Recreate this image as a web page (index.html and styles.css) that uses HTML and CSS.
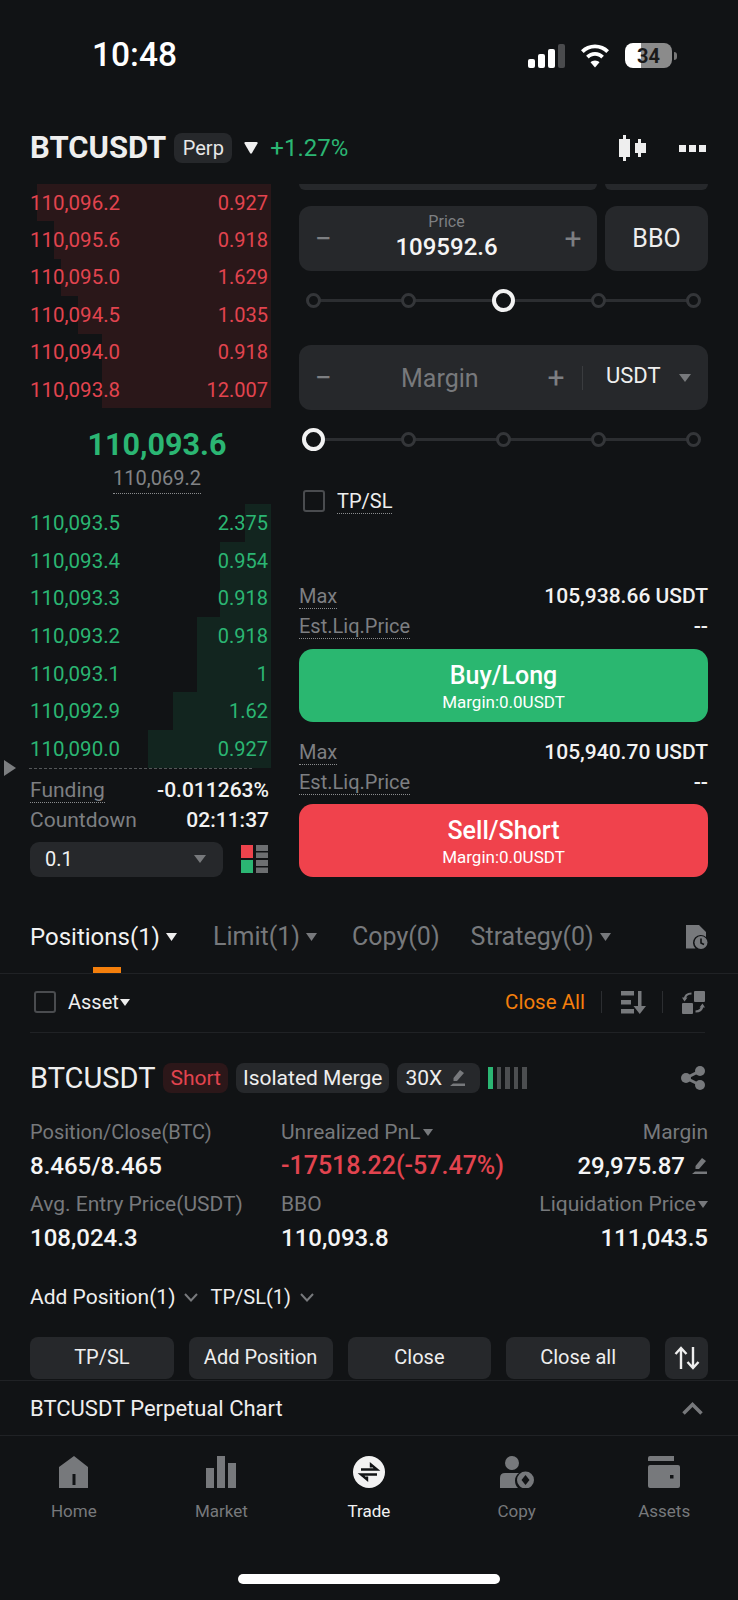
FILE: index.html
```html
<!DOCTYPE html>
<html lang="en">
<head>
<meta charset="utf-8">
<title>BTCUSDT Perp</title>
<link rel="stylesheet" href="styles.css">
</head>
<body>
<div class="app">
  <div class="status">
    <span class="time">10:48</span>
    <div class="status-icons">
      <svg class="signal" width="37" height="24" viewBox="0 0 37 24"><rect x="0" y="15" width="7" height="9" rx="2" fill="#fff"/><rect x="10" y="10" width="7" height="14" rx="2" fill="#fff"/><rect x="20" y="5" width="7" height="19" rx="2" fill="#fff"/><rect x="30" y="0" width="7" height="24" rx="2" fill="#4a4b4d"/></svg>
      <svg class="wifi" width="32" height="24" viewBox="0 0 32 24"><path d="M16 4.500C21.500 4.500 26.500 6.700 30 10.300L27.300 13C24.400 10.100 20.400 8.300 16 8.300S7.600 10.100 4.700 13L2 10.300C5.500 6.700 10.500 4.500 16 4.500Z" fill="#fff" transform="translate(0 -4)"/><path d="M16 10C19.500 10 22.600 11.400 24.900 13.700L22.200 16.400C20.600 14.800 18.400 13.800 16 13.800S11.400 14.800 9.800 16.400L7.100 13.700C9.400 11.400 12.500 10 16 10Z" fill="#fff" transform="translate(0 -2)"/><path d="M16 16.500C17.800 16.500 19.300 17.200 20.500 18.300L16 23.500L11.500 18.300C12.700 17.200 14.200 16.500 16 16.500Z" fill="#fff"/></svg>
      <div class="battery"><span class="battery-text">34</span></div>
      <span class="battery-cap"></span>
    </div>
  </div>

  <header class="head">
    <span class="symbol">BTCUSDT</span>
    <span class="perp">Perp</span>
    <svg class="head-caret" width="14" height="12" viewBox="0 0 14 12"><path d="M0.500 1.500Q0 0 1.500 0H12.500Q14 0 13.500 1.500L8 11Q7 12.500 6 11Z" fill="#f0f0f0"/></svg>
    <span class="change">+1.27%</span>
    <svg class="candle" width="28" height="26" viewBox="0 0 28 26"><path d="M6 0H9V4H13V22H9V26H6V22H2V4H6Z" fill="#eee" transform="translate(-2 0)"/><path d="M19 4H22V8H27V18H22V22H19V18H16V8H19Z" fill="#eee"/></svg>
    <div class="more"><i></i><i></i><i></i></div>
  </header>

  <main class="trade">
    <section class="book">
      <div class="rows">
        <div class="row ask"><span class="depth" style="width:234px"></span><span>110,096.2</span><span class="qty">0.927</span></div>
        <div class="row ask"><span class="depth" style="width:217px"></span><span>110,095.6</span><span class="qty">0.918</span></div>
        <div class="row ask"><span class="depth" style="width:210px"></span><span>110,095.0</span><span class="qty">1.629</span></div>
        <div class="row ask"><span class="depth" style="width:193px"></span><span>110,094.5</span><span class="qty">1.035</span></div>
        <div class="row ask"><span class="depth" style="width:169px"></span><span>110,094.0</span><span class="qty">0.918</span></div>
        <div class="row ask"><span class="depth" style="width:169px"></span><span>110,093.8</span><span class="qty">12.007</span></div>
      </div>
      <div class="mid">
        <div class="mid-price">110,093.6</div>
        <div class="mid-sub"><span class="dotted">110,069.2</span></div>
      </div>
      <div class="rows bids">
        <div class="row bid"><span class="depth" style="width:26px"></span><span>110,093.5</span><span class="qty">2.375</span></div>
        <div class="row bid"><span class="depth" style="width:51px"></span><span>110,093.4</span><span class="qty">0.954</span></div>
        <div class="row bid"><span class="depth" style="width:51px"></span><span>110,093.3</span><span class="qty">0.918</span></div>
        <div class="row bid"><span class="depth" style="width:74px"></span><span>110,093.2</span><span class="qty">0.918</span></div>
        <div class="row bid"><span class="depth" style="width:74px"></span><span>110,093.1</span><span class="qty">1</span></div>
        <div class="row bid"><span class="depth" style="width:98px"></span><span>110,092.9</span><span class="qty">1.62</span></div>
        <div class="row bid"><span class="depth" style="width:123px"></span><span>110,090.0</span><span class="qty">0.927</span></div>
      </div>
      <div class="dash"></div>
      <div class="fund-row first"><span class="dotted label">Funding</span><span class="fund-val">-0.011263%</span></div>
      <div class="fund-row"><span class="label">Countdown</span><span class="fund-val">02:11:37</span></div>
      <div class="tick-row">
        <div class="tick"><span>0.1</span><svg width="12" height="8" viewBox="0 0 12 8"><path d="M0 0H12L6 8Z" fill="#77797c"/></svg></div>
        <svg class="layout-ico" width="27" height="28" viewBox="0 0 27 28"><rect x="0" y="0" width="12" height="13" fill="#ee434c"/><rect x="0" y="15" width="12" height="13" fill="#2bb673"/><rect x="15" y="0" width="12" height="6" fill="#6d6f71"/><rect x="15" y="7.500" width="12" height="5.500" fill="#6d6f71"/><rect x="15" y="15" width="12" height="6" fill="#6d6f71"/><rect x="15" y="22.500" width="12" height="5.500" fill="#6d6f71"/></svg>
      </div>
    </section>

    <section class="form">
      <div class="cut-row"><span class="cut cut-a"></span><span class="cut cut-b"></span></div>
      <div class="price-row">
        <div class="box price-box">
          <span class="pm">−</span>
          <div class="price-center"><span class="price-label">Price</span><span class="price-val">109592.6</span></div>
          <span class="pm">+</span>
        </div>
        <div class="box bbo">BBO</div>
      </div>
      <div class="slider">
        <i class="dot"></i><i class="dot"></i><i class="knob"></i><i class="dot"></i><i class="dot"></i>
      </div>
      <div class="box margin-box">
        <span class="pm">−</span>
        <span class="margin-label">Margin</span>
        <span class="pm">+</span>
        <span class="vline"></span>
        <span class="unit">USDT</span>
        <svg width="12" height="8" viewBox="0 0 12 8"><path d="M0 0H12L6 8Z" fill="#77797c"/></svg>
      </div>
      <div class="slider start">
        <i class="knob"></i><i class="dot"></i><i class="dot"></i><i class="dot"></i><i class="dot"></i>
      </div>
      <div class="tpsl"><span class="check"></span><span class="dotted tpsl-text">TP/SL</span></div>
      <div class="info first"><span class="dotted label">Max</span><span class="info-val">105,938.66 USDT</span></div>
      <div class="info"><span class="dotted label">Est.Liq.Price</span><span class="info-val">--</span></div>
      <button class="action buy"><b>Buy/Long</b><small>Margin:0.0USDT</small></button>
      <div class="info second"><span class="dotted label">Max</span><span class="info-val">105,940.70 USDT</span></div>
      <div class="info"><span class="dotted label">Est.Liq.Price</span><span class="info-val">--</span></div>
      <button class="action sell"><b>Sell/Short</b><small>Margin:0.0USDT</small></button>
    </section>
    <svg class="collapse" width="12" height="16" viewBox="0 0 12 16"><path d="M0 0L12 8L0 16Z" fill="#7c7e80"/></svg>
  </main>

  <nav class="tabs">
    <span class="tab active">Positions(1)<svg width="11" height="8" viewBox="0 0 11 8"><path d="M0 0H11L5.500 8Z" fill="#eee"/></svg><i class="tab-bar"></i></span>
    <span class="tab">Limit(1)<svg width="11" height="8" viewBox="0 0 11 8"><path d="M0 0H11L5.500 8Z" fill="#77797c"/></svg></span>
    <span class="tab plain">Copy(0)</span>
    <span class="tab">Strategy(0)<svg width="11" height="8" viewBox="0 0 11 8"><path d="M0 0H11L5.500 8Z" fill="#77797c"/></svg></span>
    <svg class="doc-ico" width="22" height="24" viewBox="0 0 22 24"><path d="M0 0H13L20 7V12A7.500 7.500 0 0 0 9.500 23.500H0Z" fill="#77797c"/><circle cx="15" cy="17.500" r="6.500" fill="#77797c"/><path d="M15 13.500V18L18 19.500" stroke="#111315" stroke-width="1.600" fill="none"/></svg>
  </nav>

  <div class="filter">
    <span class="check"></span>
    <span class="asset">Asset</span>
    <svg width="10" height="7" viewBox="0 0 10 7"><path d="M0 0H10L5 7Z" fill="#eee"/></svg>
    <span class="close-all">Close All</span>
    <span class="sep"></span>
    <svg class="sort-ico" width="25" height="23" viewBox="0 0 25 23"><rect x="0" y="0" width="13" height="4.500" fill="#77797c"/><rect x="0" y="9" width="10" height="4.500" fill="#77797c"/><rect x="0" y="18" width="13" height="4.500" fill="#77797c"/><path d="M17 0H20.500V15H25L18.750 23L12.500 15H17Z" fill="#77797c"/></svg>
    <span class="sep"></span>
    <svg class="swap-ico" width="23" height="23" viewBox="0 0 23 23"><rect x="12" y="0" width="11" height="11" rx="1" fill="#77797c"/><rect x="0" y="12" width="11" height="11" rx="1" fill="#77797c"/><path d="M9.500 2.500C5.500 2.500 3 4.500 2.500 8.500" stroke="#77797c" stroke-width="2.200" fill="none"/><path d="M0 6.500L2.500 10.500L5.500 6.500Z" fill="#77797c"/><path d="M13.500 20.500C17.500 20.500 20 18.500 20.500 14.500" stroke="#77797c" stroke-width="2.200" fill="none"/><path d="M17.500 16.500L20.500 12.500L23 16.500Z" fill="#77797c"/></svg>
  </div>

  <section class="pos">
    <div class="pos-head">
      <span class="pos-symbol">BTCUSDT</span>
      <span class="pill short">Short</span>
      <span class="pill">Isolated Merge</span>
      <span class="pill lev">30X<svg class="pen" width="16" height="16" viewBox="0 0 16 16"><path d="M10 0L14 3L7 11H3.500V8ZM3 13.500H15V16H0Z" fill="#77797c"/></svg></span>
      <div class="risk"><i class="on"></i><i></i><i></i><i></i><i></i></div>
      <svg class="share" width="24" height="24" viewBox="0 0 24 24"><path d="M19 5L5 12L19 19" stroke="#77797c" stroke-width="3" fill="none"/><circle cx="19" cy="5" r="5" fill="#77797c"/><circle cx="5" cy="12" r="5" fill="#77797c"/><circle cx="19" cy="19" r="5" fill="#77797c"/></svg>
    </div>
    <div class="stats">
      <div class="stat"><span class="stat-label narrow">Position/Close(BTC)</span><span class="stat-val">8.465/8.465</span></div>
      <div class="stat"><span class="stat-label">Unrealized PnL<svg width="10" height="7" viewBox="0 0 10 7"><path d="M0 0H10L5 7Z" fill="#77797c"/></svg></span><span class="stat-val neg">-17518.22(-57.47%)</span></div>
      <div class="stat right"><span class="stat-label">Margin</span><span class="stat-val">29,975.87<svg class="pen" width="16" height="16" viewBox="0 0 16 16"><path d="M10 0L14 3L7 11H3.500V8ZM3 13.500H15V16H0Z" fill="#77797c"/></svg></span></div>
      <div class="stat"><span class="stat-label">Avg. Entry Price(USDT)</span><span class="stat-val">108,024.3</span></div>
      <div class="stat"><span class="stat-label">BBO</span><span class="stat-val">110,093.8</span></div>
      <div class="stat right"><span class="stat-label">Liquidation Price<svg width="10" height="7" viewBox="0 0 10 7"><path d="M0 0H10L5 7Z" fill="#77797c"/></svg></span><span class="stat-val">111,043.5</span></div>
    </div>
    <div class="links">
      <span>Add Position(1)</span><svg width="14" height="9" viewBox="0 0 14 9"><path d="M1 1L7 7.500L13 1" stroke="#77797c" stroke-width="2" fill="none"/></svg>
      <span class="link-small">TP/SL(1)</span><svg width="14" height="9" viewBox="0 0 14 9"><path d="M1 1L7 7.500L13 1" stroke="#77797c" stroke-width="2" fill="none"/></svg>
    </div>
    <div class="btns">
      <span class="btn">TP/SL</span>
      <span class="btn">Add Position</span>
      <span class="btn">Close</span>
      <span class="btn">Close all</span>
      <span class="btn small"><svg width="26" height="24" viewBox="0 0 26 24"><path d="M7 23V2M1.500 8L7 2L12.500 8M19 1V22M13.500 16L19 22L24.500 16" stroke="#eee" stroke-width="2.400" fill="none"/></svg></span>
    </div>
  </section>

  <div class="chart-row">
    <span>BTCUSDT Perpetual Chart</span>
    <svg width="21" height="13" viewBox="0 0 21 13"><path d="M1.500 11.500L10.500 2.500L19.500 11.500" stroke="#77797c" stroke-width="3.500" fill="none"/></svg>
  </div>

  <nav class="bottom">
    <div class="nav-item"><svg width="30" height="32" viewBox="0 0 30 32"><path fill-rule="evenodd" d="M15 0L29 11V32H0V11ZM13.500 18V29H16.500V18Z" fill="#77797c"/></svg><span>Home</span></div>
    <div class="nav-item"><svg width="30" height="32" viewBox="0 0 30 32"><rect x="0" y="12" width="8" height="20" fill="#77797c"/><rect x="11" y="0" width="8" height="32" fill="#77797c"/><rect x="22" y="7" width="8" height="25" fill="#77797c"/></svg><span>Market</span></div>
    <div class="nav-item active"><svg width="32" height="32" viewBox="0 0 32 32"><circle cx="16" cy="16" r="16" fill="#f2f2f2"/><path d="M8 13.500H24L18 8.500V11.500" stroke="#111315" stroke-width="2.400" fill="none"/><path d="M24 18.500H8L14 23.500V20.500" stroke="#111315" stroke-width="2.400" fill="none"/></svg><span>Trade</span></div>
    <div class="nav-item"><svg width="34" height="32" viewBox="0 0 34 32"><circle cx="12" cy="7" r="7" fill="#77797c"/><path d="M0 32V22Q0 17 5 17H19Q15 20 15 24.500Q15 29 18 32Z" fill="#77797c"/><circle cx="25.500" cy="24" r="8.500" fill="#77797c"/><path d="M25.500 19L29.500 24L25.500 29L21.500 24Z" fill="#111315"/></svg><span>Copy</span></div>
    <div class="nav-item"><svg width="32" height="32" viewBox="0 0 32 32"><path d="M2 0H26V5H0V2Q0 0 2 0Z" fill="#77797c"/><path fill-rule="evenodd" d="M2 9H30Q32 9 32 11V30Q32 32 30 32H2Q0 32 0 30V11Q0 9 2 9ZM22 19V22.500H25.500V19Z" fill="#77797c"/></svg><span>Assets</span></div>
  </nav>
  <div class="home-bar-wrap"><span class="home-bar"></span></div>
</div>
</body>
</html>
```

FILE: styles.css
```css
* { box-sizing: border-box; }
html, body { margin: 0; padding: 0; background: #111315; }
body { font-family: Roboto, "Noto Sans", sans-serif; color: #f2f2f2; }
.app { width: 738px; height: 1600px; overflow: hidden; position: relative; background: #111315; }
i { display: block; font-style: normal; }
svg { display: block; flex: none; }

.status { height: 124px; padding: 39px 61px 0 92px; display: flex; align-items: flex-start; justify-content: space-between; }
.time { font-size: 33.500px; font-weight: 500; line-height: 32px; color: #fff; }
.status-icons { display: flex; align-items: center; margin-top: 4px; }
.wifi { margin-left: 14px; }
.battery { margin-left: 14px; width: 47px; height: 25px; border-radius: 8px; background: linear-gradient(90deg, #fff 0 34%, #8b8b8b 34% 100%); display: flex; align-items: center; justify-content: center; }
.battery-text { font-size: 20px; font-weight: 700; color: #1a1a1a; }
.battery-cap { width: 3px; height: 8px; background: #777; border-radius: 0 3px 3px 0; margin-left: 2px; }

.head { height: 48px; padding: 0 32px 0 30px; display: flex; align-items: center; }
.symbol { font-size: 31px; font-weight: 700; line-height: 30px; color: #eee; }
.perp { margin-left: 8px; height: 30px; width: 58px; border-radius: 8px; background: #26282b; display: flex; align-items: center; justify-content: center; font-size: 20px; color: #e8e8e8; }
.head-caret { margin-left: 12px; }
.change { margin-left: 12px; font-size: 24px; color: #2bb673; }
.candle { margin-left: auto; }
.more { margin-left: 32px; display: flex; gap: 3px; }
.more i { width: 7px; height: 7px; background: #eee; }

.trade { height: 706px; margin-top: 12px; display: flex; position: relative; }
.book { width: 271px; padding-left: 30px; flex: none; }
.rows { width: 241px; }
.row { height: 37.400px; position: relative; display: flex; justify-content: space-between; align-items: center; padding-right: 3px; font-size: 20.500px; }
.row span { position: relative; }
.row .qty { font-size: 20px; }
.row .depth { position: absolute; right: 0; top: 0; bottom: 0; }
.ask { color: #e2444f; }
.ask .depth { background: #2a1719; }
.bid { height: 37.600px; color: #2bb673; }
.bid .depth { background: #12251f; }
.mid { height: 96px; display: flex; flex-direction: column; align-items: center; padding-top: 20px; width: 254px; }
.mid-price { font-size: 30.500px; font-weight: 700; line-height: 34px; color: #2bb673; }
.mid-sub { font-size: 20px; color: #818386; margin-top: 4px; line-height: 24px; }
.mid-sub .dotted { padding-bottom: 3px; }
.dotted { border-bottom: 1px dotted #8a8c8e; }
.dash { width: 223px; margin-left: -1px; border-top: 1px dashed #55575a; }
.fund-row { width: 239px; height: 30px; display: flex; justify-content: space-between; align-items: center; font-size: 21px; }
.fund-row.first { margin-top: 7px; height: 29px; }
.label { color: #7d7f82; }
.fund-val { color: #f2f2f2; font-weight: 500; }
.tick-row { display: flex; align-items: center; margin-top: 7px; width: 238px; justify-content: space-between; }
.tick { width: 193px; height: 35px; border-radius: 9px; background: #26282b; display: flex; justify-content: space-between; align-items: center; padding: 0 17px 0 15px; font-size: 20px; color: #f2f2f2; }

.form { width: 409px; margin-left: 28px; flex: none; }
.cut-row { display: flex; gap: 8px; height: 6px; }
.cut { height: 6px; background: #26282b; border-radius: 0 0 9px 9px; }
.cut-a { width: 298px; }
.cut-b { flex: 1; }
.price-row { display: flex; gap: 8px; margin-top: 16px; }
.box { height: 65px; border-radius: 12px; background: #26282b; display: flex; align-items: center; }
.price-box { width: 298px; padding: 0 14px; justify-content: space-between; }
.pm { font-size: 30px; line-height: 30px; color: #7d7f82; width: 20px; text-align: center; flex: none; }
.price-center { display: flex; flex-direction: column; align-items: center; padding-bottom: 4px; margin-left: -3px; }
.price-label { font-size: 16px; line-height: 20px; color: #7d7f82; }
.price-val { font-size: 24px; line-height: 30px; font-weight: 500; color: #f5f5f5; }
.bbo { flex: 1; justify-content: center; font-size: 25px; color: #eee; }
.slider { height: 30px; margin-top: 14px; padding: 0 7px; display: flex; align-items: center; justify-content: space-between; background: linear-gradient(#2c2e31, #2c2e31) center / 380px 3px no-repeat; }
.dot { width: 15px; height: 15px; border-radius: 50%; background: #111315; border: 3px solid #343639; }
.knob { width: 23px; height: 23px; margin: 0 -4px; border-radius: 50%; background: #111315; border: 4px solid #f2f2f2; }
.margin-box { margin-top: 30px; padding: 0 17px 0 14px; }
.margin-label { margin-left: 68px; font-size: 25px; color: #77797c; width: 145px; flex: none; padding-top: 2px; }
.vline { width: 1px; height: 24px; background: #3a3c3f; margin-left: 16px; }
.unit { font-size: 22px; color: #eee; margin-left: 23px; padding-bottom: 5px; }
.margin-box svg { margin-left: auto; }
.tpsl { margin-top: 36px; height: 22px; display: flex; align-items: center; padding-left: 4px; }
.check { width: 22px; height: 22px; border: 2px solid #4a4c4f; border-radius: 3px; display: block; flex: none; }
.tpsl-text { margin-left: 12px; font-size: 20px; color: #eee; }
.info { height: 30px; display: flex; justify-content: space-between; align-items: center; font-size: 20px; }
.info.first { margin-top: 69px; }
.info.second { margin-top: 15px; }
.info-val { color: #f2f2f2; font-weight: 500; font-size: 21px; }
.action { width: 100%; height: 73px; margin-top: 8px; border: 0; border-radius: 14px; display: flex; flex-direction: column; align-items: center; justify-content: center; color: #fff; font-family: inherit; padding: 3px 0 0; }
.action b { font-size: 25px; font-weight: 500; line-height: 30px; }
.action small { font-size: 17px; line-height: 22px; }
.buy { background: #2ab770; }
.sell { background: #f0424c; margin-top: 7px; }
.collapse { position: absolute; left: 4px; top: 576px; }

.tabs { height: 84px; padding: 0 30px; display: flex; align-items: center; border-bottom: 1px solid #202225; font-size: 25px; }
.tab { color: #77797c; display: flex; align-items: center; gap: 6px; position: relative; margin-right: 35px; padding-top: 10px; white-space: nowrap; }
.tab.plain { margin-right: 31px; }
.tab.active { color: #f2f2f2; font-size: 24px; margin-right: 36px; }
.tab-bar { position: absolute; left: 63px; top: 54px; width: 28px; height: 6px; background: #f47f0c; }
.doc-ico { margin-left: auto; margin-top: 10px; }

.filter { height: 59px; margin: 0 33px 0 30px; display: flex; align-items: center; border-bottom: 1px solid #202225; padding: 0 0 2px 4px; }
.asset { margin-left: 12px; margin-right: 1px; font-size: 20px; color: #eee; }
.close-all { margin-left: auto; font-size: 20.500px; color: #f47f0c; }
.sep { width: 1px; height: 22px; background: #2c2e31; margin: 0 19px 0 16px; }

.pos { padding: 0 30px; }
.pos-head { height: 30px; margin-top: 30px; display: flex; align-items: center; }
.pos-symbol { font-size: 29px; color: #eee; margin-right: 8px; }
.pill { height: 30px; border-radius: 8px; background: #26282b; padding: 0 7px; display: flex; align-items: center; font-size: 21px; color: #eee; margin-right: 8px; white-space: nowrap; }
.pill.short { background: #2c1719; color: #e2444f; }
.pill.lev { width: 83px; gap: 8px; padding: 0 8px; }
.risk { display: flex; gap: 4px; height: 22px; }
.risk i { width: 4.500px; background: #4c4e50; }
.risk i.on { background: #2bb673; }
.share { margin-left: auto; margin-right: 3px; }
.stats { margin-top: 24px; display: grid; grid-template-columns: 251px 1fr auto; row-gap: 2px; }
.stat { display: flex; flex-direction: column; height: 70px; }
.stat.right { align-items: flex-end; }
.stat-label { font-size: 21px; line-height: 30px; color: #77797c; display: flex; align-items: center; gap: 2px; height: 30px; white-space: nowrap; }
.stat-label.narrow { font-size: 20px; }
.stat-val { font-size: 24px; line-height: 36px; font-weight: 500; color: #f5f5f5; display: flex; align-items: center; gap: 7px; margin-top: 1px; white-space: nowrap; }
.stat-val.neg { color: #e2444f; font-size: 25px; }
.links { margin-top: 23px; height: 30px; display: flex; align-items: center; font-size: 21px; color: #eee; }
.links svg { margin: 0 12px 0 9px; }
.link-small { font-size: 20px; }
.btns { margin-top: 25px; display: flex; gap: 15px; }
.btn { flex: 1; height: 42px; border-radius: 8px; background: #26282b; display: flex; align-items: center; justify-content: center; font-size: 20px; color: #eee; white-space: nowrap; padding-bottom: 2px; }
.btn.small { flex: none; width: 43px; padding-bottom: 0; }

.chart-row { margin-top: 1px; height: 56px; padding: 1px 35px 0 30px; display: flex; justify-content: space-between; align-items: center; border-top: 1px solid #202225; border-bottom: 1px solid #202225; font-size: 22px; color: #eee; }
.bottom { height: 132px; padding-top: 20px; display: flex; align-items: flex-start; }
.nav-item { width: 147.600px; display: flex; flex-direction: column; align-items: center; font-size: 17px; color: #77797c; }
.nav-item span { margin-top: 11px; line-height: 24px; }
.nav-item.active { color: #f2f2f2; }
.home-bar-wrap { height: 31px; display: flex; justify-content: center; padding-top: 6px; }
.home-bar { width: 262px; height: 10px; border-radius: 5px; background: #fff; }
```
